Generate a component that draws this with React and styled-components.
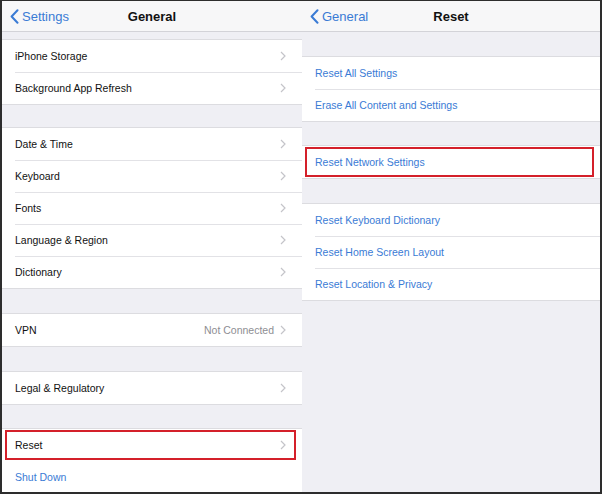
import React from "react";
import styled, { createGlobalStyle } from "styled-components";

const GlobalStyle = createGlobalStyle`
  html, body {
    margin: 0;
    padding: 0;
    background: #2d2d2d;
  }
  body {
    font-family: "Liberation Sans", Arial, sans-serif;
    -webkit-font-smoothing: antialiased;
  }
`;

const Frame = styled.div`
  width: 602px;
  height: 494px;
  box-sizing: border-box;
  border-style: solid;
  border-color: #2d2d2d;
  border-width: 1px 2px 2px 2px;
  display: flex;
  overflow: hidden;
`;

const Screen = styled.div`
  width: ${(p) => p.width}px;
  flex-shrink: 0;
  background: #efeff4;
  display: flex;
  flex-direction: column;
  overflow: hidden;
`;

const NavBar = styled.div`
  height: 30px;
  flex-shrink: 0;
  background: #f7f7f8;
  border-bottom: 1px solid #d3d3d8;
  display: grid;
  grid-template-columns: 1fr auto 1fr;
  align-items: center;
  padding: 0 8px;
`;

const BackButton = styled.div`
  display: flex;
  align-items: center;
  gap: 3px;
  color: #3a7bd5;
  font-size: 13px;
`;

const Title = styled.div`
  font-size: 13px;
  font-weight: bold;
  color: #111;
`;

const Gap = styled.div`
  height: ${(p) => p.h}px;
  flex-shrink: 0;
`;

const Group = styled.div`
  background: #fff;
  border-top: 1px solid #dcdce0;
  border-bottom: 1px solid #dcdce0;
  flex-shrink: 0;
`;

const Row = styled.div`
  position: relative;
  height: 32px;
  display: flex;
  align-items: center;
  padding-left: 13px;
  padding-right: 16px;
  box-sizing: border-box;
  font-size: 10.5px;
  color: ${(p) => (p.link ? "#3a7bd5" : "#111")};

  & + &::before {
    content: "";
    position: absolute;
    top: 0;
    left: 13px;
    right: 0;
    height: 1px;
    background: #e2e2e6;
  }

  ${(p) =>
    p.highlight &&
    `
    &::after {
      content: "";
      position: absolute;
      top: 1px;
      bottom: 1px;
      left: 3px;
      right: 6px;
      border: 2px solid #d4202a;
    }
  `}
`;

const Label = styled.span`
  flex: 1;
`;

const Detail = styled.span`
  color: #8e8e93;
  margin-right: 6px;
`;

const Chevron = () => (
  <svg width="6" height="10" viewBox="0 0 6 10">
    <path d="M1 1l4 4-4 4" fill="none" stroke="#c4c4c9" strokeWidth="1.2" />
  </svg>
);

const BackChevron = () => (
  <svg width="9" height="15" viewBox="0 0 9 15">
    <path
      d="M7.5 1.2L1.6 7.5l5.9 6.3"
      fill="none"
      stroke="#3a7bd5"
      strokeWidth="2"
      strokeLinecap="round"
      strokeLinejoin="round"
    />
  </svg>
);

const Nav = ({ back, title }) => (
  <NavBar>
    <BackButton>
      <BackChevron />
      {back}
    </BackButton>
    <Title>{title}</Title>
    <div />
  </NavBar>
);

const Item = ({ label, detail, link, highlight, chevron = true }) => (
  <Row link={link} highlight={highlight}>
    <Label>{label}</Label>
    {detail && <Detail>{detail}</Detail>}
    {chevron && <Chevron />}
  </Row>
);

const App = () => (
  <>
    <GlobalStyle />
    <Frame>
      <Screen width={300}>
        <Nav back="Settings" title="General" />
        <Gap h={7} />
        <Group>
          <Item label="iPhone Storage" />
          <Item label="Background App Refresh" />
        </Group>
        <Gap h={22} />
        <Group>
          <Item label="Date & Time" />
          <Item label="Keyboard" />
          <Item label="Fonts" />
          <Item label="Language & Region" />
          <Item label="Dictionary" />
        </Group>
        <Gap h={24} />
        <Group>
          <Item label="VPN" detail="Not Connected" />
        </Group>
        <Gap h={24} />
        <Group>
          <Item label="Legal & Regulatory" />
        </Group>
        <Gap h={23} />
        <Group>
          <Item label="Reset" highlight />
          <Item label="Shut Down" link chevron={false} />
        </Group>
      </Screen>
      <Screen width={298}>
        <Nav back="General" title="Reset" />
        <Gap h={24} />
        <Group>
          <Item label="Reset All Settings" link chevron={false} />
          <Item label="Erase All Content and Settings" link chevron={false} />
        </Group>
        <Gap h={23} />
        <Group>
          <Item label="Reset Network Settings" link chevron={false} highlight />
        </Group>
        <Gap h={24} />
        <Group>
          <Item label="Reset Keyboard Dictionary" link chevron={false} />
          <Item label="Reset Home Screen Layout" link chevron={false} />
          <Item label="Reset Location & Privacy" link chevron={false} />
        </Group>
      </Screen>
    </Frame>
  </>
);

export default App;
